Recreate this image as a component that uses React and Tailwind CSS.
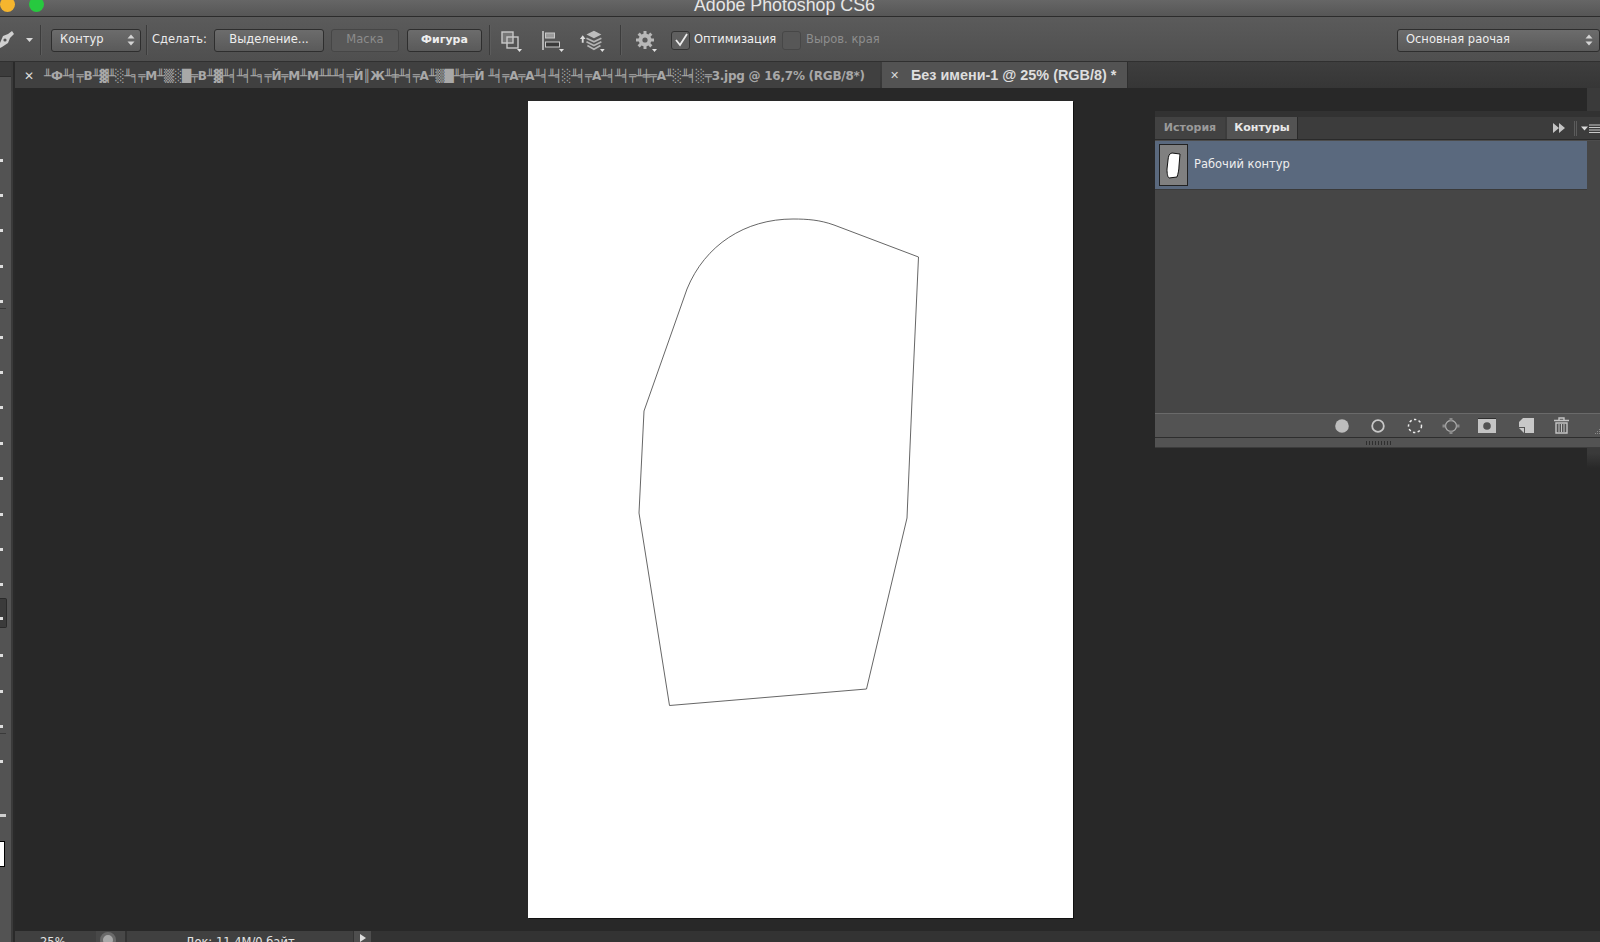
import React from "react";

const font = "font-['DejaVu_Sans','Liberation_Sans',sans-serif]";
const slots = Array.from({ length: 18 }, (_, i) => i);

function Updown({ className = "" }) {
  return (
    <svg width="8" height="12" viewBox="0 0 8 12" className={className}>
      <path d="M4 0.5 L7.5 4.5 H0.5 Z M4 11.5 L7.5 7.5 H0.5 Z" fill="#d4d4d4" />
    </svg>
  );
}

function Corner() {
  return (
    <svg width="5" height="3" viewBox="0 0 5 3" className="self-end -ml-[2px]">
      <path d="M0 0 H5 L2.5 3 Z" fill="#e0e0e0" />
    </svg>
  );
}

function Sep({ className = "" }) {
  return <div className={`w-px h-[30px] bg-[#3c3c3c] border-r border-[#5c5c5c] box-content shrink-0 ${className}`} />;
}

function Btn({ children, className = "" }) {
  return (
    <div
      className={`h-[23px] flex items-center justify-center rounded-[3px] border border-[#2e2e2e] bg-gradient-to-b from-[#6c6c6c] to-[#5a5a5a] text-[#eeeeee] text-[11.5px] font-medium ${className}`}
    >
      {children}
    </div>
  );
}

function GearIcon() {
  return (
    <svg width="18" height="18" viewBox="0 0 18 18">
      <g fill="#b8b8b8">
        <circle cx="9" cy="9" r="6.4" />
        {[0, 45, 90, 135, 180, 225, 270, 315].map((a) => (
          <rect key={a} x="7.5" y="0" width="3" height="4" transform={`rotate(${a} 9 9)`} />
        ))}
      </g>
      <circle cx="9" cy="9" r="2.6" fill="#5a5a5a" />
    </svg>
  );
}

function Options() {
  return (
    <div className={`h-[45px] shrink-0 flex items-center pt-[2px] border-b border-[#303030] bg-gradient-to-b from-[#5b5b5b] to-[#4f4f4f] ${font}`}>
      <svg width="14" height="20" viewBox="0 0 14 20" className="shrink-0">
        <path d="M0 13 L3 6 L8 4 L12 1 L14 4 L10 8 L8 13 L2 17 L0 18 Z" fill="#d0d0d0" />
        <circle cx="5" cy="10" r="1.6" fill="#555555" />
      </svg>
      <svg width="7" height="4" viewBox="0 0 7 4" className="ml-[12px] shrink-0">
        <path d="M0 0 H7 L3.5 4 Z" fill="#d8d8d8" />
      </svg>
      <Sep className="ml-[7px]" />
      <Btn className="ml-[9px] w-[90px] !justify-between pl-[8px] pr-[5px]">
        <span>Контур</span>
        <Updown />
      </Btn>
      <Sep className="ml-[5px]" />
      <span className="ml-[4px] w-[62px] text-[11.5px] text-[#eaeaea] font-medium whitespace-nowrap">Сделать:</span>
      <Btn className="w-[110px]">Выделение...</Btn>
      <div className="ml-[7px] w-[68px] h-[23px] flex items-center justify-center rounded-[3px] border border-[#464646] bg-[#585858] text-[#8c8c8c] text-[11.5px]">
        Маска
      </div>
      <Btn className="ml-[8px] w-[75px] !font-semibold !text-[11px]">Фигура</Btn>
      <Sep className="ml-[7px]" />
      <div className="ml-[10px] flex items-center w-[22px] h-[24px]">
        <svg width="18" height="18" viewBox="0 0 18 18">
          <rect x="1" y="1" width="11" height="11" fill="#777777" stroke="#c8c8c8" strokeWidth="1.4" />
          <rect x="6" y="6" width="11" height="11" fill="none" stroke="#c8c8c8" strokeWidth="1.4" />
        </svg>
        <Corner />
      </div>
      <div className="ml-[19px] flex items-center w-[22px] h-[24px]">
        <svg width="19" height="19" viewBox="0 0 19 19">
          <path d="M1 0 V19" stroke="#c8c8c8" strokeWidth="1.6" />
          <rect x="3.5" y="2" width="9" height="5" fill="#9a9a9a" stroke="#c8c8c8" />
          <rect x="3.5" y="11" width="14" height="5" fill="#3a3a3a" stroke="#c8c8c8" />
        </svg>
        <Corner />
      </div>
      <div className="ml-[15px] flex items-center w-[26px] h-[24px]">
        <svg width="25" height="22" viewBox="0 0 25 22">
          <path d="M4 6 L7 10 H5 V14 H3 V10 H1 Z" fill="#dcdcdc" />
          <path d="M16 1 L24 5 L16 9 L8 5 Z" fill="#bdbdbd" />
          <path d="M8 9 L16 13 L24 9 M8 13 L16 17 L24 13 M9 17 L16 21 L23 17" fill="none" stroke="#b4b4b4" strokeWidth="1.8" />
        </svg>
        <Corner />
      </div>
      <Sep className="ml-[15px]" />
      <div className="ml-[14px] flex items-center w-[24px] h-[24px]">
        <GearIcon />
        <Corner />
      </div>
      <div className="ml-[11px] w-[19px] h-[19px] flex items-center justify-center rounded-[3px] border border-[#333333] bg-[#5f5f5f] shrink-0">
        <svg width="16" height="15" viewBox="0 0 16 15">
          <path d="M3 7 L7 12 L14 1" fill="none" stroke="#ececec" strokeWidth="1.8" />
        </svg>
      </div>
      <span className="ml-[4px] w-[84px] text-[11.5px] text-[#f0f0f0] font-medium whitespace-nowrap">Оптимизация</span>
      <div className="ml-[4px] w-[19px] h-[19px] rounded-[3px] border border-[#474747] bg-[#575757] shrink-0" />
      <span className="ml-[5px] text-[11.5px] text-[#8e8e8e] whitespace-nowrap">Выров. края</span>
      <Btn className="ml-auto w-[203px] !justify-between pl-[8px] pr-[6px] !font-normal">
        <span>Основная раочая</span>
        <Updown />
      </Btn>
    </div>
  );
}

function Toolbar() {
  return (
    <div className="w-[11px] shrink-0 flex flex-col bg-[#535353] border-r-0">
      <div className="h-[15px] bg-[#3c3c3c] border-b border-[#2e2e2e] shrink-0" />
      <div className="h-[65.5px] shrink-0" />
      {slots.map((i) => (
        <div key={i} className="h-[35.4px] shrink-0 flex flex-col justify-center relative">
          <div
            className={
              i === 13
                ? "-mt-[14px] h-[30px] w-[7px] flex items-end pb-[7px] bg-[#3b3b3b] border border-l-0 border-[#2a2a2a] rounded-r-[2px]"
                : "h-[30px] w-[7px] flex items-center"
            }
          >
            <div className="w-[3px] h-[3px] bg-[#dedede]" />
          </div>
          {(i === 4 || i === 16) && <div className="absolute bottom-[10px] left-0 w-[6px] h-px bg-[#3a3a3a]" />}
        </div>
      ))}
      <div className="h-[37px] shrink-0 flex items-end">
        <div className="w-[6px] h-[3px] bg-[#cfcfcf]" />
      </div>
      <div className="mt-[24px] w-[5px] h-[26px] bg-white border border-l-0 border-black shrink-0" />
    </div>
  );
}

function Tabs() {
  return (
    <div className="h-[26px] shrink-0 flex bg-gradient-to-b from-[#3e3e3e] to-[#363636] font-['Liberation_Sans',sans-serif]">
      <div className="w-[865px] shrink-0 flex items-center pt-[1px] bg-[#404040] overflow-hidden">
        <span className="ml-[9px] w-[20px] shrink-0 text-[12px] text-[#dcdcdc]">✕</span>
        <span className="font-['DejaVu_Sans',sans-serif] font-bold text-[12px] tracking-[-0.25px] text-[#a8a8a8] whitespace-nowrap">
          ╨Ф╨╡╤В╨▓╨░╨╕╤М╨▒░█╤В╨▓╨╡╨╡╨╕╤Й╤М╨М╨╨╨╡╤Й║Ж╨╪╨╡╤А╨▒█╨╪╤Й ╨╡╤А╤А╨╡╨╡░╨╡╤А╨╡╨╡╤╨╪╤А╨░╨╡░╤3.jpg @ 16,7% (RGB/8*)
        </span>
      </div>
      <div className="ml-[2px] w-[246px] shrink-0 flex items-center pt-[1px] bg-[#535353] border-r border-[#2e2e2e]">
        <span className="ml-[8px] w-[21px] text-[11px] text-[#d8d8d8]">✕</span>
        <span className="font-bold text-[14.4px] text-[#dedede] whitespace-nowrap">Без имени-1 @ 25% (RGB/8) *</span>
      </div>
    </div>
  );
}

function Panel() {
  return (
    <div className={`absolute left-[1140px] top-[23px] w-[445px] h-[337px] flex flex-col bg-[#464646] ${font}`}>
      <div className="h-[6px] bg-[#323232] shrink-0" />
      <div className="h-[23px] shrink-0 flex items-stretch bg-[#3c3c3c] border-b border-[#2a2a2a] text-[11px] font-bold">
        <div className="w-[70px] flex items-center justify-center text-[#9a9a9a] bg-[#424242]">История</div>
        <div className="ml-[2px] w-[71px] flex items-center justify-center text-[#e8e8e8] bg-[#535353] border-r border-[#2a2a2a]">Контуры</div>
        <div className="ml-auto flex items-center">
          <svg width="12" height="10" viewBox="0 0 12 10">
            <path d="M0 0 L6 5 L0 10 Z M6 0 L12 5 L6 10 Z" fill="#c4c4c4" />
          </svg>
          <div className="ml-[9px] w-[3px] h-[15px] border-x border-[#5c5c5c]" />
          <svg width="19" height="9" viewBox="0 0 19 9" className="ml-[4px]">
            <path d="M0 2.5 H7 L3.5 6.5 Z" fill="#dadada" />
            <path d="M8 1 H19 M8 3.5 H19 M8 6 H19 M8 8.5 H19" stroke="#c8c8c8" strokeWidth="1.2" />
          </svg>
        </div>
      </div>
      <div className="h-px bg-[#4c4c4c] shrink-0" />
      <div className="h-[49px] w-[432px] shrink-0 flex items-center bg-[#5a697e] border-b border-[#3a3a3a]">
        <div className="ml-[4px] w-[29px] h-[42px] flex items-center justify-center bg-[#808080] border border-[#222222] shrink-0">
          <svg width="15" height="27" viewBox="0 0 15 27">
            <path d="M6 1 C3 1.5 2.5 4 2 8 L1 17 C1 21 1.5 25 3 26 L11 25 C12 22 13 18 13 14 L14 2 Z" fill="#ffffff" stroke="#111111" strokeWidth="1" />
          </svg>
        </div>
        <span className="ml-[6px] text-[11.5px] text-[#eeeeee] font-medium">Рабочий контур</span>
      </div>
      <div className="flex-1 w-[432px]" />
      <div className="h-[25px] shrink-0 relative flex items-center bg-[#535353] border-y border-[#6a6a6a] border-b-[#2e2e2e]">
        <div className="flex items-center ml-[179px]">
          <svg width="16" height="16" viewBox="0 0 16 16"><circle cx="8" cy="8" r="6.8" fill="#bdbdbd" /></svg>
          <svg width="16" height="16" viewBox="0 0 16 16" className="ml-[20px]"><circle cx="8" cy="8" r="5.8" fill="none" stroke="#c8c8c8" strokeWidth="1.8" /></svg>
          <svg width="16" height="16" viewBox="0 0 16 16" className="ml-[21px]"><circle cx="8" cy="8" r="6.5" fill="none" stroke="#ededed" strokeWidth="1.5" strokeDasharray="2.4 2.4" /></svg>
          <svg width="20" height="18" viewBox="0 0 20 18" className="ml-[18px]">
            <circle cx="10" cy="9" r="5.5" fill="none" stroke="#b0b0b0" strokeWidth="1.3" />
            <path d="M8.5 1h3v3h-3zM8.5 14h3v3h-3zM1.5 7.5h3v3h-3zM15.5 7.5h3v3h-3z" fill="#8c8c8c" />
          </svg>
          <svg width="18" height="15" viewBox="0 0 18 15" className="ml-[17px]">
            <rect width="18" height="15" fill="#c4c4c4" />
            <rect width="18" height="1" fill="#2f2f2f" />
            <circle cx="9" cy="8" r="3.8" fill="#515151" />
          </svg>
          <svg width="15" height="15" viewBox="0 0 15 15" className="ml-[23px]">
            <path d="M4 0 H15 V15 H6 V9 H0 V4 Z" fill="#c8c8c8" />
            <path d="M0 10 H5 V15 Z" fill="#c8c8c8" />
          </svg>
          <svg width="15" height="17" viewBox="0 0 15 17" className="ml-[20px]">
            <path d="M0 3.5 H15 M5 3 V1 H10 V3" fill="none" stroke="#c4c4c4" strokeWidth="1.4" />
            <path d="M2 6 H13 V16 H2 Z" fill="none" stroke="#c4c4c4" strokeWidth="1.4" />
            <path d="M5 7 V15 M7.5 7 V15 M10 7 V15" stroke="#c4c4c4" strokeWidth="1" />
          </svg>
        </div>
        <svg width="8" height="8" viewBox="0 0 8 8" className="ml-auto self-end mb-[1px]">
          <path d="M7 1h1v1h-1zM5 3h1v1h-1zM7 3h1v1h-1zM3 5h1v1h-1zM5 5h1v1h-1zM7 5h1v1h-1z" fill="#8a8a8a" />
        </svg>
      </div>
      <div className="h-[10px] shrink-0 flex items-center justify-center pl-[4px] bg-[#535353] border-b border-[#3c3c3c]">
        <div className="w-[27px] h-[4px] bg-[repeating-linear-gradient(90deg,#2e2e2e_0,#2e2e2e_1px,transparent_1px,transparent_3px)]" />
      </div>
    </div>
  );
}

function Canvas() {
  return (
    <div className="w-[545px] h-[817px] mt-[13px] ml-[513px] bg-white shrink-0 shadow-[1px_1px_0_#111111]">
      <svg width="545" height="817" viewBox="528 101 545 817" className="block">
        <path
          d="M918.5 257 L912 400 L907 518 L866.5 689 L669.5 705.5 L639 513 L644 411 L687 289 C705 245 745 219 793 219 C808 219 820 220 834 225 Z"
          fill="none"
          stroke="#555555"
          strokeWidth="0.9"
        />
      </svg>
    </div>
  );
}

function Status() {
  return (
    <div className={`h-[11px] shrink-0 flex overflow-hidden bg-[#333333] text-[11.5px] leading-[14px] text-[#e4e4e4] font-medium ${font}`}>
      <div className="w-[81px] shrink-0 pl-[25px] pt-[4px] bg-[#404040]">25%</div>
      <div className="w-[29px] shrink-0 flex pl-[4px] bg-[#484848]">
        <div className="mt-[1px] w-[16px] h-[16px] rounded-full bg-[#a8a8a8] border-[3px] border-[#6a6a6a]" />
      </div>
      <div className="ml-[2px] w-[226px] shrink-0 text-center pt-[4px] bg-[#404040]">Док: 11,4М/0 байт</div>
      <div className="ml-[1px] w-[17px] shrink-0 flex justify-center pt-[3px] bg-[#4e4e4e]">
        <svg width="6" height="8" viewBox="0 0 6 8"><path d="M0 0 L6 4 L0 8 Z" fill="#dedede" /></svg>
      </div>
    </div>
  );
}

export default function App() {
  return (
    <div className="w-[1600px] h-[942px] flex flex-col overflow-hidden bg-[#282828]">
      <div className={`h-[17px] shrink-0 flex items-end overflow-hidden border-b border-[#2c2c2c] bg-gradient-to-b from-[#666666] to-[#565656] ${font}`}>
        <div className="flex items-center self-start -mt-[3px]">
          <div className="w-[15px] h-[15px] rounded-full bg-[#f5b52e]" />
          <div className="ml-[14px] w-[15px] h-[15px] rounded-full bg-[#27c93f]" />
        </div>
        <div className="ml-[650px] leading-[16px] text-[#e6e6e6] whitespace-nowrap font-['Liberation_Sans',sans-serif] text-[17.8px] -translate-y-[3px]">
          Adobe Photoshop CS6
        </div>
      </div>
      <Options />
      <div className="flex-1 min-h-0 flex">
        <Toolbar />
        <div className="w-[2px] bg-[#3a3a3a] shrink-0" />
        <div className="w-[2px] bg-[#2a2a2a] shrink-0" />
        <div className="flex-1 min-w-0 flex flex-col">
          <Tabs />
          <div className="flex-1 min-h-0 relative flex bg-[#282828]">
            <div className="flex-1"><Canvas /></div>
            <div className="w-[13px] shrink-0 bg-[linear-gradient(#3a3a3a_0,#3a3a3a_365px,#282828_380px)]" />
            <Panel />
          </div>
          <Status />
        </div>
      </div>
    </div>
  );
}
